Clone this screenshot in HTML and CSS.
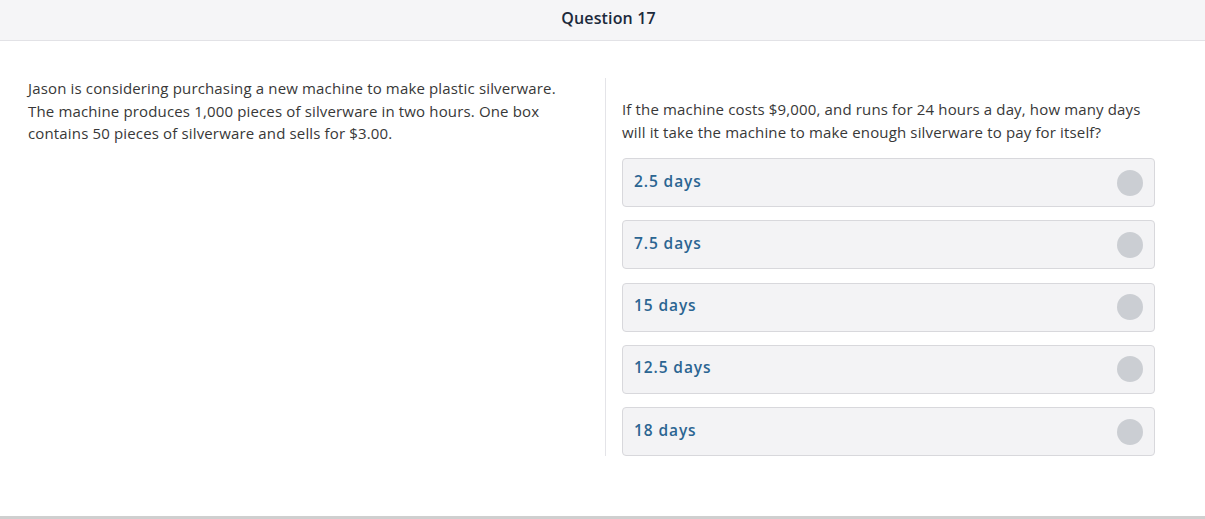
FILE: index.html
```html
<!DOCTYPE html>
<html>
<head>
<meta charset="utf-8">
<link rel="stylesheet" href="styles.css">
</head>
<body>
<div class="page">
  <header class="header"><h1 class="title">Question 17</h1></header>
  <main class="main">
    <section class="passage">
      <p>Jason is considering purchasing a new machine to make plastic silverware. The machine produces 1,000 pieces of silverware in two hours. One box contains 50 pieces of silverware and sells for $3.00.</p>
    </section>
    <section class="question">
      <p class="prompt">If the machine costs $9,000, and runs for 24 hours a day, how many days will it take the machine to make enough silverware to pay for itself?</p>
      <div class="options">
        <div class="option"><span class="label">2.5 days</span><span class="radio"></span></div>
        <div class="option"><span class="label">7.5 days</span><span class="radio"></span></div>
        <div class="option"><span class="label">15 days</span><span class="radio"></span></div>
        <div class="option"><span class="label">12.5 days</span><span class="radio"></span></div>
        <div class="option"><span class="label">18 days</span><span class="radio"></span></div>
      </div>
    </section>
  </main>
  <div class="footer-line"></div>
</div>
</body>
</html>
```
FILE: styles.css
```css
* { box-sizing: border-box; }
html, body { margin: 0; padding: 0; background: #fff; }
body { font-family: "Open Sans", "Lato", sans-serif; color: #333; }
.page { width: 1205px; height: 519px; display: flex; flex-direction: column; }
.header {
  height: 41px;
  background: #f5f5f7;
  border-bottom: 1px solid #e2e2e6;
  display: flex; align-items: center; justify-content: center;
}
.title { margin: 0; font-size: 16px; font-weight: 600; color: #1c2a3c; letter-spacing: 0.15px; padding: 0 0 4px 12px; }
.main { flex: 1; display: flex; align-items: flex-start; padding-top: 37px; }
.passage {
  width: 606px;
  padding: 0 28px 0 28px;
  border-right: 1px solid #e4e4e8;
  align-self: stretch;
  margin-bottom: 60px;
}
.passage p, .prompt { margin: 0; font-size: 15px; letter-spacing: 0.15px; line-height: 22.5px; color: #383838; position: relative; top: -1px; }
.question { width: 549px; padding: 21px 0 0 16px; }
.prompt { margin-bottom: 14px; padding-right: 5px; }
.options { display: flex; flex-direction: column; gap: 13.3px; }
.option {
  height: 49px;
  background: #f3f3f5;
  border: 1px solid #d8d8dc;
  border-radius: 4px;
  display: flex; align-items: center; justify-content: space-between;
  padding: 0 11px 0 11px;
}
.label { font-size: 15.5px; font-weight: 600; color: #2b6592; letter-spacing: 0.9px; position: relative; top: -2px; }
.radio { width: 26px; height: 26px; border-radius: 50%; background: #cbced3; }
.footer-line { height: 3px; background: #cfcfcf; }
```
